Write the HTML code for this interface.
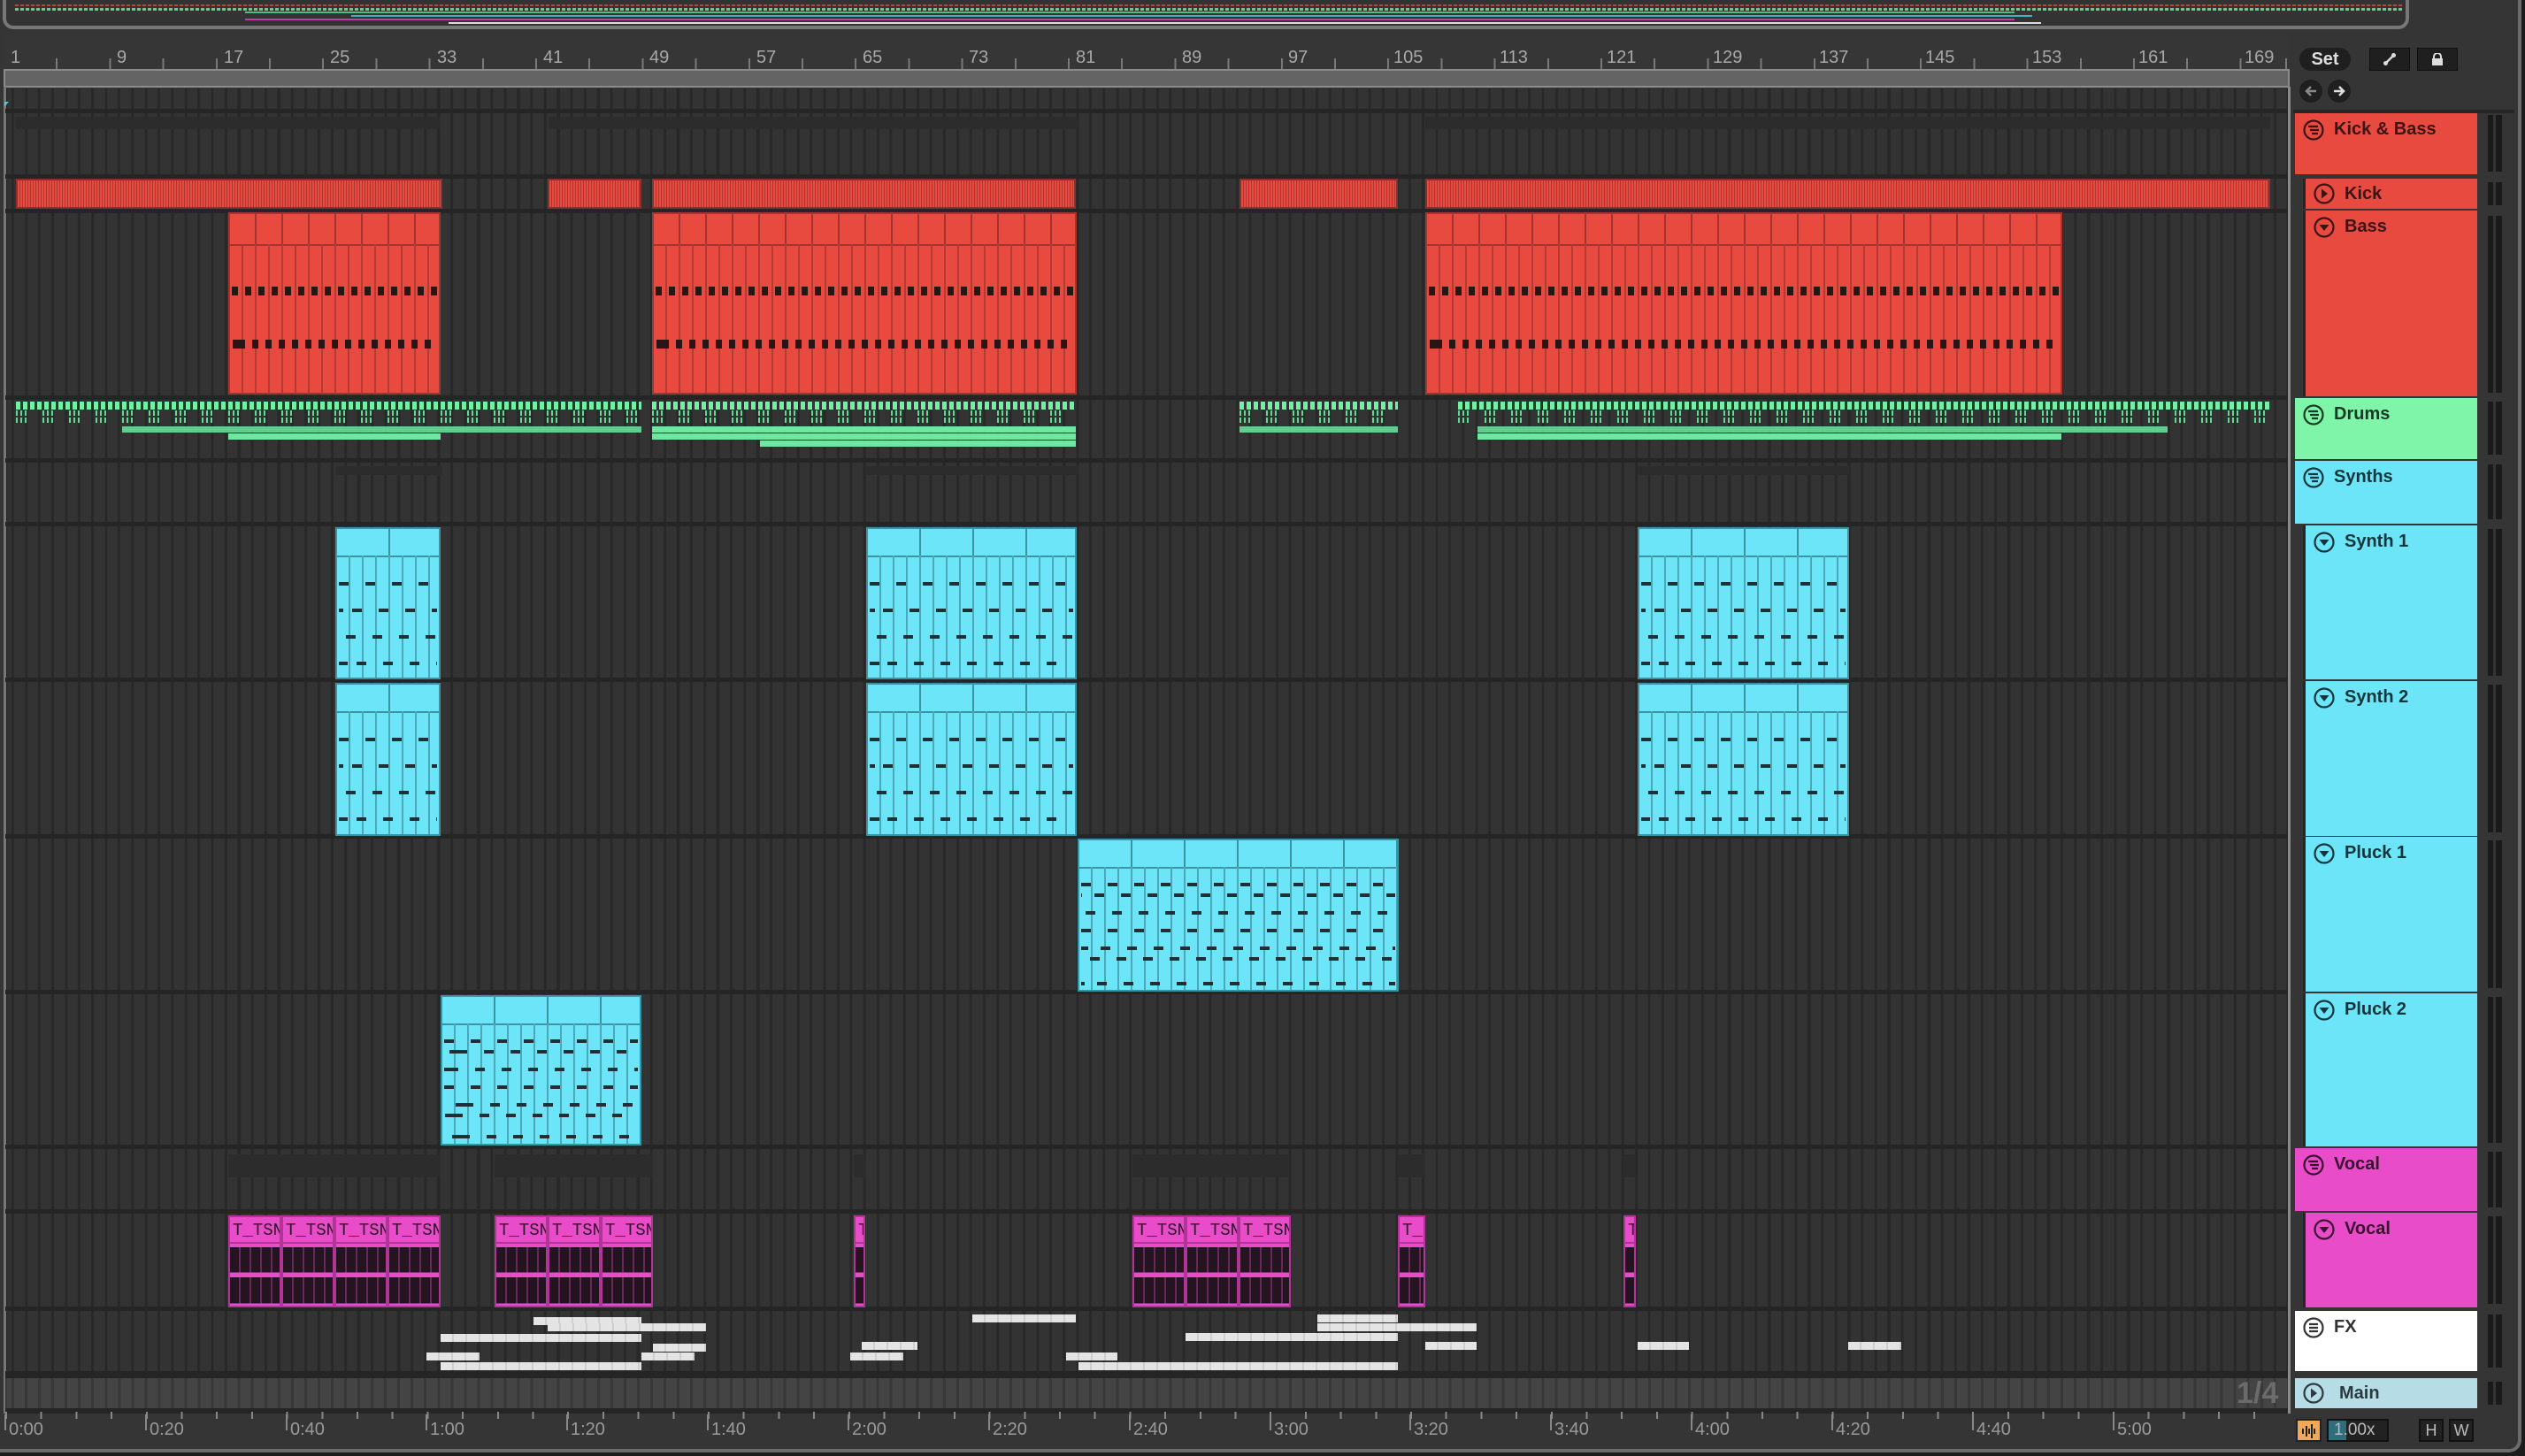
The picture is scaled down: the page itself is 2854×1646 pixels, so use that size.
<!DOCTYPE html>
<html><head><meta charset="utf-8"><style>
*{box-sizing:border-box;margin:0;padding:0}
body{width:2854px;height:1646px;background:#1c1c1c;overflow:hidden;font-family:"Liberation Sans",sans-serif;position:relative}
.a{position:absolute}
#app{left:0;top:0;width:2850px;height:1642px;background:#353535;border:4px solid #6b6b6b;border-top:none;border-left:none;border-radius:0 0 14px 0}
.grid{background:#333 repeating-linear-gradient(90deg,#282828 0 3px,#333 3px 15.04px);background-position:7px 0}
.sep{background:#252525;height:5px;left:6px;width:2580px}
.rul{color:#a8a8a8;font-size:20px;top:54px}
.kick{background:repeating-linear-gradient(90deg,#e84a40 0 2px,#a8372f 2px 3px,#e84a40 3px 5px,#b03a33 5px 6px);border:2px solid #8e2f2a;top:202px;height:34px}
.bass{background:#e84a40;top:240px;height:206px;border:2px solid #a3342f}
.bass:before{content:"";position:absolute;left:0;right:0;top:0;height:34px;background:repeating-linear-gradient(90deg,#e84a40 0 28px,#a3342f 28px 30px);border-bottom:2px solid #a3342f}
.bass:after{content:"";position:absolute;left:0;right:0;top:34px;bottom:0;background:repeating-linear-gradient(90deg,transparent 0 13px,#b63a34 13px 15px)}
.bd{position:absolute;left:2px;right:2px;height:10px;background:repeating-linear-gradient(90deg,#2a1515 0 7px,transparent 7px 15px);z-index:2}
.syn{background:#6ce5f8;border:2px solid #3b93a3}
.syn:before{content:"";position:absolute;left:0;right:0;top:0;height:30px;background:repeating-linear-gradient(90deg,#6ce5f8 0 58px,#3b93a3 58px 60px);border-bottom:2px solid #3b93a3}
.syn:after{content:"";position:absolute;left:0;right:0;top:30px;bottom:0;background:repeating-linear-gradient(90deg,transparent 0 13px,#4aa8b8 13px 15px)}
.nd{position:absolute;height:4px;left:2px;right:2px;z-index:2;background:repeating-linear-gradient(90deg,#1f2f33 0 11px,transparent 11px 30px)}
.voc{background:#e84cc9;top:1374px;height:104px;border:2px solid #b03597;overflow:hidden}
.voc .h{position:absolute;left:0;right:0;top:0;height:30px;color:#2a1025;font-family:"Liberation Mono",monospace;font-size:19px;line-height:30px;padding-left:3px;white-space:nowrap;overflow:hidden;border-bottom:2px solid #b03597}
.voc .w{position:absolute;left:0;right:0;top:32px;bottom:0;background:repeating-linear-gradient(90deg,transparent 0 10px,rgba(232,76,201,.35) 10px 12px),linear-gradient(#e84cc9 0 2px,#24141f 2px 45%,#e84cc9 45% 53%,#24141f 53% 96%,#e84cc9 96%)}
.fx{height:9px;background:repeating-linear-gradient(90deg,#e4e4e4 0 13px,#cfcfcf 13px 15px)}
.dr1{top:454px;height:9px;background:repeating-linear-gradient(90deg,#72f0a4 0 5px,transparent 5px 8px)}
.dr2{height:6px;background:repeating-linear-gradient(90deg,#65d895 0 2px,transparent 2px 5px,#65d895 5px 7px,transparent 7px 10px,#65d895 10px 12px,transparent 12px 30px)}
.drb{height:7px;background:#6fe7a0}
.fade{background:#2c2c2c}
.hd{left:2594px;width:206px;font-weight:bold;font-size:20px;color:#3a1414;padding-left:44px;line-height:36px}
.hd.sub{left:2603px;width:197px;border-left:3px solid #262626}
.ic{position:absolute;left:9px;top:7px;width:24px;height:24px}
.mt{left:2812px;width:16px;background:linear-gradient(90deg,#1a1a1a 0 6px,transparent 6px 9px,#1a1a1a 9px)}
.tl{color:#9a9a9a;font-size:20px;top:1605px}
.tl:before{content:"";position:absolute;left:-5px;top:-6px;width:2px;height:18px;background:#888}
</style></head><body>
<svg width="0" height="0" style="position:absolute"><defs>
<symbol id="g" viewBox="0 0 24 24"><circle cx="12" cy="12" r="10.5" fill="none" stroke="currentColor" stroke-width="2.2"/><path d="M6 8h11M8 12h10M10 16h7" stroke="currentColor" stroke-width="2.2"/></symbol>
<symbol id="f" viewBox="0 0 24 24"><circle cx="12" cy="12" r="10.5" fill="none" stroke="currentColor" stroke-width="2.2"/><path d="M7 8h10M7 12h10M7 16h10" stroke="currentColor" stroke-width="2.2"/></symbol>
<symbol id="d" viewBox="0 0 24 24"><circle cx="12" cy="12" r="10.5" fill="none" stroke="currentColor" stroke-width="2.2"/><path d="M6.5 9h11L12 16z" fill="currentColor"/></symbol>
<symbol id="r" viewBox="0 0 24 24"><circle cx="12" cy="12" r="10.5" fill="none" stroke="currentColor" stroke-width="2.2"/><path d="M9 6.5v11L16 12z" fill="currentColor"/></symbol>
</defs></svg>
<div id="app" class="a"></div>
<!-- overview -->
<div class="a" style="left:3px;top:0;width:2720px;height:33px;border:4px solid #777;border-top:none;border-radius:0 0 12px 12px;background:#333;overflow:hidden">
 <div class="a" style="left:10px;top:5px;width:2700px;height:2px;background:repeating-linear-gradient(90deg,#c0403a 0 4px,transparent 4px 6px)"></div>
 <div class="a" style="left:10px;top:9px;width:2700px;height:3px;background:repeating-linear-gradient(90deg,#62d08d 0 4px,transparent 4px 6px)"></div>
 <div class="a" style="left:270px;top:13px;width:2000px;height:2px;background:#4fbd7e"></div>
 <div class="a" style="left:390px;top:17px;width:1900px;height:2px;background:#45b0c2"></div>
 <div class="a" style="left:270px;top:21px;width:2000px;height:2px;background:#c03fa5"></div>
 <div class="a" style="left:500px;top:25px;width:1800px;height:2px;background:#ddd"></div>
</div>
<!-- ruler -->
<div class="a" style="left:6px;top:36px;width:2580px;height:42px;background:#363636"></div>
<div class="a rul" style="left:12px">1</div><div class="a rul" style="left:132px">9</div><div class="a rul" style="left:253px">17</div><div class="a rul" style="left:373px">25</div><div class="a rul" style="left:494px">33</div><div class="a rul" style="left:614px">41</div><div class="a rul" style="left:734px">49</div><div class="a rul" style="left:855px">57</div><div class="a rul" style="left:975px">65</div><div class="a rul" style="left:1095px">73</div><div class="a rul" style="left:1216px">81</div><div class="a rul" style="left:1336px">89</div><div class="a rul" style="left:1456px">97</div><div class="a rul" style="left:1575px">105</div><div class="a rul" style="left:1695px">113</div><div class="a rul" style="left:1816px">121</div><div class="a rul" style="left:1936px">129</div><div class="a rul" style="left:2056px">137</div><div class="a rul" style="left:2176px">145</div><div class="a rul" style="left:2297px">153</div><div class="a rul" style="left:2417px">161</div><div class="a rul" style="left:2537px">169</div>
<div class="a" style="left:6px;top:66px;width:2580px;height:12px;background:repeating-linear-gradient(90deg,#8a8a8a 0 2px,transparent 2px 60.2px);background-position:-3px 0;opacity:.8"></div>
<div class="a" style="left:4px;top:78px;width:2584px;height:21px;background:#646464;border:2px solid #8b8b8b"></div>
<!-- arrangement -->
<div class="a grid" style="left:6px;top:100px;width:2580px;height:1498px"></div>
<div class="a" style="left:2586px;top:98px;width:3px;height:1500px;background:#8a8a8a"></div>
<div class="a" style="left:4px;top:98px;width:3px;height:1500px;background:#777"></div>
<div class="a sep" style="top:123px"></div>
<div class="a sep" style="top:197px"></div>
<div class="a sep" style="top:236px"></div>
<div class="a sep" style="top:447px"></div>
<div class="a sep" style="top:518px"></div>
<div class="a sep" style="top:590px"></div>
<div class="a sep" style="top:766px"></div>
<div class="a sep" style="top:943px"></div>
<div class="a sep" style="top:1119px"></div>
<div class="a sep" style="top:1294px"></div>
<div class="a sep" style="top:1367px"></div>
<div class="a sep" style="top:1477px"></div>
<div class="a" style="left:6px;top:1550px;width:2580px;height:8px;background:#252525"></div>
<div class="a" style="left:6px;top:1558px;width:2580px;height:34px;background:#444 repeating-linear-gradient(90deg,#383838 0 3px,#444 3px 15.04px);background-position:7px 0"></div>
<div class="a" style="left:6px;top:1592px;width:2580px;height:6px;background:#252525"></div>
<div class="a" style="left:2528px;top:1556px;font-size:34px;font-weight:bold;color:#6b6b6b">1/4</div>
<!-- faint group clips -->
<div class="a fade" style="left:18px;top:132px;width:480px;height:14px"></div>
<div class="a fade" style="left:620px;top:132px;width:600px;height:14px"></div>
<div class="a fade" style="left:1611px;top:132px;width:955px;height:14px"></div>
<div class="a fade" style="left:380px;top:527px;width:120px;height:10px"></div>
<div class="a fade" style="left:979px;top:527px;width:240px;height:10px"></div>
<div class="a fade" style="left:1851px;top:527px;width:240px;height:10px"></div>
<div class="a fade" style="left:258px;top:1305px;width:240px;height:26px"></div>
<div class="a fade" style="left:559px;top:1305px;width:178px;height:26px"></div>
<div class="a fade" style="left:1280px;top:1305px;width:178px;height:26px"></div>
<div class="a fade" style="left:1580px;top:1305px;width:31px;height:26px"></div>
<div class="a fade" style="left:965px;top:1305px;width:13px;height:26px"></div>
<div class="a fade" style="left:1835px;top:1305px;width:14px;height:26px"></div>
<!-- kick -->
<div class="a kick" style="left:18px;width:482px"></div>
<div class="a kick" style="left:619px;width:106px"></div>
<div class="a kick" style="left:737px;width:479px"></div>
<div class="a kick" style="left:1401px;width:179px"></div>
<div class="a kick" style="left:1611px;width:955px"></div>
<!-- bass -->
<div class="a bass" style="left:258px;width:240px"><div class="bd" style="top:82px"></div><div class="bd" style="top:142px;background-position:8px 0"></div></div>
<div class="a bass" style="left:737px;width:480px"><div class="bd" style="top:82px"></div><div class="bd" style="top:142px;background-position:8px 0"></div></div>
<div class="a bass" style="left:1611px;width:720px"><div class="bd" style="top:82px"></div><div class="bd" style="top:142px;background-position:8px 0"></div></div>
<!-- drums -->
<div class="a dr1" style="left:18px;width:707px"></div><div class="a dr1" style="left:737px;width:479px"></div><div class="a dr1" style="left:1401px;width:179px"></div><div class="a dr1" style="left:1648px;width:918px"></div>
<div class="a dr2" style="top:464px;left:18px;width:707px"></div><div class="a dr2" style="top:472px;left:18px;width:707px"></div>
<div class="a dr2" style="top:464px;left:737px;width:479px"></div><div class="a dr2" style="top:472px;left:737px;width:479px"></div>
<div class="a dr2" style="top:464px;left:1401px;width:179px"></div><div class="a dr2" style="top:472px;left:1401px;width:179px"></div>
<div class="a dr2" style="top:464px;left:1648px;width:918px"></div><div class="a dr2" style="top:472px;left:1648px;width:918px"></div>
<div class="a drb" style="top:482px;left:138px;width:587px;opacity:.85"></div>
<div class="a drb" style="top:482px;left:737px;width:479px"></div>
<div class="a drb" style="top:482px;left:1401px;width:179px;opacity:.85"></div>
<div class="a drb" style="top:482px;left:1670px;width:780px;opacity:.85"></div>
<div class="a drb" style="top:490px;left:258px;width:240px"></div>
<div class="a drb" style="top:490px;left:737px;width:479px"></div>
<div class="a drb" style="top:498px;left:859px;width:357px"></div>
<div class="a drb" style="top:490px;left:1670px;width:660px"></div>
<!-- synth 1/2 -->
<div class="a syn" style="left:379px;top:596px;width:119px;height:172px"><div class="nd" style="top:60px"></div><div class="nd" style="top:90px;background-position:15px 0"></div><div class="nd" style="top:120px;background-position:8px 0"></div><div class="nd" style="top:150px;background-position:20px 0"></div></div>
<div class="a syn" style="left:979px;top:596px;width:238px;height:172px"><div class="nd" style="top:60px"></div><div class="nd" style="top:90px;background-position:15px 0"></div><div class="nd" style="top:120px;background-position:8px 0"></div><div class="nd" style="top:150px;background-position:20px 0"></div></div>
<div class="a syn" style="left:1851px;top:596px;width:239px;height:172px"><div class="nd" style="top:60px"></div><div class="nd" style="top:90px;background-position:15px 0"></div><div class="nd" style="top:120px;background-position:8px 0"></div><div class="nd" style="top:150px;background-position:20px 0"></div></div>
<div class="a syn" style="left:379px;top:772px;width:119px;height:173px"><div class="nd" style="top:60px"></div><div class="nd" style="top:90px;background-position:15px 0"></div><div class="nd" style="top:120px;background-position:8px 0"></div><div class="nd" style="top:150px;background-position:20px 0"></div></div>
<div class="a syn" style="left:979px;top:772px;width:238px;height:173px"><div class="nd" style="top:60px"></div><div class="nd" style="top:90px;background-position:15px 0"></div><div class="nd" style="top:120px;background-position:8px 0"></div><div class="nd" style="top:150px;background-position:20px 0"></div></div>
<div class="a syn" style="left:1851px;top:772px;width:239px;height:173px"><div class="nd" style="top:60px"></div><div class="nd" style="top:90px;background-position:15px 0"></div><div class="nd" style="top:120px;background-position:8px 0"></div><div class="nd" style="top:150px;background-position:20px 0"></div></div>
<!-- pluck -->
<div class="a syn" style="left:1218px;top:948px;width:363px;height:173px"><div class="nd" style="top:48px"></div><div class="nd" style="top:60px;background-position:15px 0"></div><div class="nd" style="top:80px;background-position:5px 0"></div><div class="nd" style="top:100px"></div><div class="nd" style="top:120px;background-position:22px 0"></div><div class="nd" style="top:132px;background-position:10px 0"></div><div class="nd" style="top:160px;background-position:18px 0"></div></div>
<div class="a syn" style="left:498px;top:1125px;width:227px;height:170px"><div class="nd" style="top:48px"></div><div class="nd" style="top:60px;background-position:15px 0"></div><div class="nd" style="top:80px;background-position:5px 0"></div><div class="nd" style="top:100px"></div><div class="nd" style="top:120px;background-position:22px 0"></div><div class="nd" style="top:132px;background-position:10px 0"></div><div class="nd" style="top:156px;background-position:18px 0"></div></div>
<!-- vocal -->
<div class="a voc" style="left:258px;width:60px"><div class="h">T_TSN</div><div class="w"></div></div>
<div class="a voc" style="left:318px;width:60px"><div class="h">T_TSN</div><div class="w"></div></div>
<div class="a voc" style="left:378px;width:60px"><div class="h">T_TSN</div><div class="w"></div></div>
<div class="a voc" style="left:438px;width:60px"><div class="h">T_TSN</div><div class="w"></div></div>
<div class="a voc" style="left:559px;width:60px"><div class="h">T_TSN</div><div class="w"></div></div>
<div class="a voc" style="left:619px;width:60px"><div class="h">T_TSN</div><div class="w"></div></div>
<div class="a voc" style="left:679px;width:59px"><div class="h">T_TSN</div><div class="w"></div></div>
<div class="a voc" style="left:965px;width:13px"><div class="h">T</div><div class="w"></div></div>
<div class="a voc" style="left:1280px;width:60px"><div class="h">T_TSN</div><div class="w"></div></div>
<div class="a voc" style="left:1340px;width:60px"><div class="h">T_TSN</div><div class="w"></div></div>
<div class="a voc" style="left:1400px;width:59px"><div class="h">T_TSN</div><div class="w"></div></div>
<div class="a voc" style="left:1580px;width:31px"><div class="h">T_</div><div class="w"></div></div>
<div class="a voc" style="left:1835px;width:14px"><div class="h">T</div><div class="w"></div></div>
<!-- fx -->
<div class="a fx" style="left:603px;top:1489px;width:122px"></div>
<div class="a fx" style="left:619px;top:1496px;width:179px"></div>
<div class="a fx" style="left:498px;top:1508px;width:227px"></div>
<div class="a fx" style="left:738px;top:1519px;width:60px"></div>
<div class="a fx" style="left:482px;top:1529px;width:60px"></div>
<div class="a fx" style="left:725px;top:1529px;width:60px"></div>
<div class="a fx" style="left:498px;top:1540px;width:227px"></div>
<div class="a fx" style="left:1099px;top:1486px;width:117px"></div>
<div class="a fx" style="left:974px;top:1517px;width:63px"></div>
<div class="a fx" style="left:961px;top:1529px;width:60px"></div>
<div class="a fx" style="left:1205px;top:1529px;width:58px"></div>
<div class="a fx" style="left:1219px;top:1540px;width:361px"></div>
<div class="a fx" style="left:1340px;top:1507px;width:240px"></div>
<div class="a fx" style="left:1489px;top:1486px;width:91px"></div>
<div class="a fx" style="left:1489px;top:1496px;width:91px"></div>
<div class="a fx" style="left:1580px;top:1496px;width:89px"></div>
<div class="a fx" style="left:1611px;top:1517px;width:58px"></div>
<div class="a fx" style="left:1851px;top:1517px;width:58px"></div>
<div class="a fx" style="left:2089px;top:1517px;width:60px"></div>
<div class="a" style="left:5px;top:115px;width:0;height:0;border-left:5px solid #4fc3e0;border-bottom:6px solid transparent"></div>
<!-- time ruler -->
<div class="a" style="left:6px;top:1596px;width:2580px;height:8px;background:repeating-linear-gradient(90deg,#888 0 2px,transparent 2px 39.7px)"></div>
<div class="a tl" style="left:10px">0:00</div><div class="a tl" style="left:169px">0:20</div><div class="a tl" style="left:328px">0:40</div><div class="a tl" style="left:486px">1:00</div><div class="a tl" style="left:645px">1:20</div><div class="a tl" style="left:804px">1:40</div><div class="a tl" style="left:963px">2:00</div><div class="a tl" style="left:1122px">2:20</div><div class="a tl" style="left:1281px">2:40</div><div class="a tl" style="left:1440px">3:00</div><div class="a tl" style="left:1598px">3:20</div><div class="a tl" style="left:1757px">3:40</div><div class="a tl" style="left:1916px">4:00</div><div class="a tl" style="left:2075px">4:20</div><div class="a tl" style="left:2234px">4:40</div><div class="a tl" style="left:2393px">5:00</div>
<!-- right panel top -->
<div class="a" style="left:2599px;top:54px;width:58px;height:26px;border-radius:13px;background:#1f1f1f;color:#ddd;font-size:20px;font-weight:bold;text-align:center;line-height:26px">Set</div>
<div class="a" style="left:2678px;top:54px;width:46px;height:26px;background:#1f1f1f;border:1px solid #111"><svg class="a" style="left:14px;top:4px" width="16" height="16"><path d="M3 13L13 3" stroke="#ddd" stroke-width="2.5"/><circle cx="3.5" cy="12.5" r="2.5" fill="#ddd"/><circle cx="12.5" cy="3.5" r="2.5" fill="#ddd"/></svg></div>
<div class="a" style="left:2732px;top:54px;width:46px;height:26px;background:#1f1f1f;border:1px solid #111"><svg class="a" style="left:15px;top:5px" width="14" height="14" viewBox="0 0 14 14"><path d="M3 6V4a4 4 0 0 1 8 0v2" stroke="#ddd" stroke-width="2" fill="none"/><rect x="1" y="6" width="12" height="8" fill="#ddd"/></svg></div>
<div class="a" style="left:2599px;top:90px;width:26px;height:26px;border-radius:50%;background:#1f1f1f"><svg class="a" style="left:5px;top:5px" width="16" height="16"><path d="M14 8H3M8 3L3 8l5 5" stroke="#888" stroke-width="2.5" fill="none"/></svg></div>
<div class="a" style="left:2631px;top:90px;width:26px;height:26px;border-radius:50%;background:#1f1f1f"><svg class="a" style="left:5px;top:5px" width="16" height="16"><path d="M2 8h11M8 3l5 5-5 5" stroke="#ddd" stroke-width="2.5" fill="none"/></svg></div>
<div class="a" style="left:2592px;top:124px;width:250px;height:4px;background:#262626"></div>
<!-- headers -->
<div class="a hd" style="top:128px;height:69px;background:#e84a40"><svg class="ic"><use href="#g"/></svg>Kick &amp; Bass</div>
<div class="a hd sub" style="top:202px;height:34px;background:#e84a40;line-height:34px"><svg class="ic" style="top:5px"><use href="#r"/></svg>Kick</div>
<div class="a hd sub" style="top:238px;height:210px;background:#e84a40"><svg class="ic"><use href="#d"/></svg>Bass</div>
<div class="a hd" style="top:450px;height:69px;background:#7ff5aa;color:#163a22"><svg class="ic"><use href="#g"/></svg>Drums</div>
<div class="a hd" style="top:521px;height:71px;background:#6ce5f8;color:#12343a"><svg class="ic"><use href="#g"/></svg>Synths</div>
<div class="a hd sub" style="top:594px;height:174px;background:#6ce5f8;color:#12343a"><svg class="ic"><use href="#d"/></svg>Synth 1</div>
<div class="a hd sub" style="top:770px;height:175px;background:#6ce5f8;color:#12343a"><svg class="ic"><use href="#d"/></svg>Synth 2</div>
<div class="a hd sub" style="top:946px;height:175px;background:#6ce5f8;color:#12343a"><svg class="ic"><use href="#d"/></svg>Pluck 1</div>
<div class="a hd sub" style="top:1123px;height:173px;background:#6ce5f8;color:#12343a"><svg class="ic"><use href="#d"/></svg>Pluck 2</div>
<div class="a hd" style="top:1298px;height:71px;background:#e84cc9;color:#3a0f30"><svg class="ic"><use href="#g"/></svg>Vocal</div>
<div class="a hd sub" style="top:1371px;height:107px;background:#e84cc9;color:#3a0f30"><svg class="ic"><use href="#d"/></svg>Vocal</div>
<div class="a hd" style="top:1482px;height:68px;background:#fff;color:#333"><svg class="ic"><use href="#f"/></svg>FX</div>
<div class="a hd" style="top:1558px;height:34px;background:#b6dce6;color:#2a3a40;line-height:34px;padding-left:50px"><svg class="ic" style="top:5px"><use href="#r"/></svg>Main</div>
<!-- meters -->
<div class="a mt" style="top:130px;height:64px"></div><div class="a mt" style="top:206px;height:26px"></div><div class="a mt" style="top:244px;height:200px"></div><div class="a mt" style="top:454px;height:60px"></div><div class="a mt" style="top:525px;height:62px"></div><div class="a mt" style="top:598px;height:166px"></div><div class="a mt" style="top:774px;height:167px"></div><div class="a mt" style="top:950px;height:167px"></div><div class="a mt" style="top:1127px;height:165px"></div><div class="a mt" style="top:1302px;height:63px"></div><div class="a mt" style="top:1375px;height:99px"></div><div class="a mt" style="top:1486px;height:60px"></div><div class="a mt" style="top:1562px;height:26px"></div>
<!-- bottom right -->
<div class="a" style="left:2595px;top:1604px;width:29px;height:26px;background:#f0a95a;border:2px solid #222"><svg class="a" style="left:4px;top:3px" width="18" height="18"><path d="M2 6v6M6 3v12M9 6v6M12 1v16M15 6v6" stroke="#222" stroke-width="2"/></svg></div>
<div class="a" style="left:2630px;top:1604px;width:70px;height:26px;background:#222;border:2px solid #111;color:#bbb;font-size:19px;line-height:22px;padding-left:6px"><span class="a" style="left:0;top:0;width:20px;height:22px;background:#2f6d7d"></span><span style="position:relative">1.00x</span></div>
<div class="a" style="left:2734px;top:1604px;width:28px;height:26px;background:#222;border:2px solid #111;color:#bbb;font-size:18px;text-align:center;line-height:22px">H</div>
<div class="a" style="left:2768px;top:1604px;width:28px;height:26px;background:#222;border:2px solid #111;color:#bbb;font-size:18px;text-align:center;line-height:22px">W</div>
</body></html>
